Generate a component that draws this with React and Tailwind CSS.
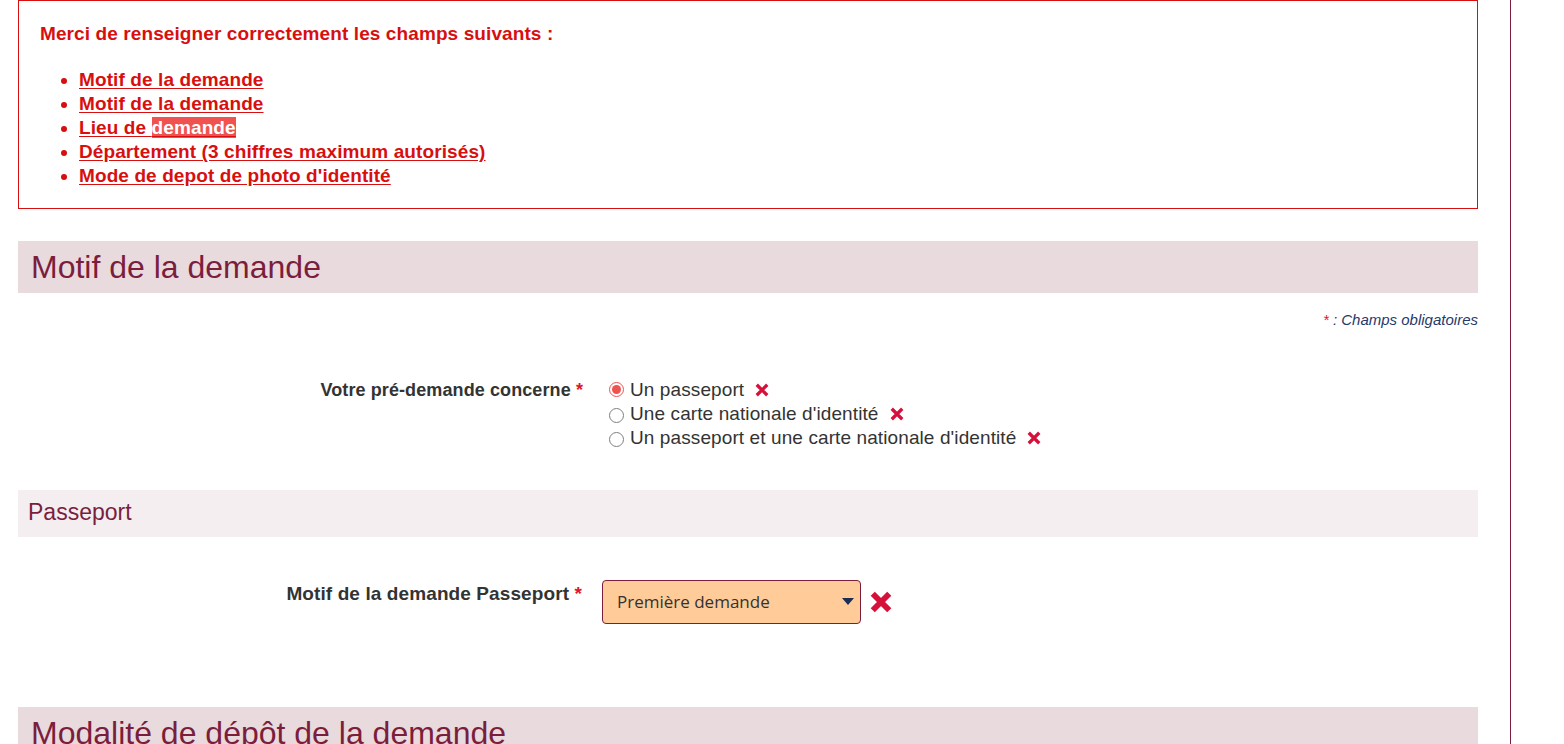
import React from "react";

function XIcon({ size = 13, stroke = 3 }) {
  return (
    <svg width={size} height={size} viewBox="0 0 12 12" className="inline-block">
      <path d="M1.5 1.5 L10.5 10.5 M10.5 1.5 L1.5 10.5" stroke="#d5103a" strokeWidth={stroke} strokeLinecap="butt" />
    </svg>
  );
}

function Radio({ checked }) {
  return checked ? (
    <span className="w-[15px] h-[15px] rounded-full border-[1.5px] border-[#ef5350] bg-white flex items-center justify-center shrink-0 mr-[6px] ml-[7px] mt-[4px]">
      <span className="block w-[9px] h-[9px] rounded-full bg-[#ef5350]"></span>
    </span>
  ) : (
    <span className="inline-block w-[15px] h-[15px] rounded-full border-[1.5px] border-[#808080] bg-white shrink-0 mr-[6px] ml-[7px] mt-[6px]"></span>
  );
}

export default function App() {
  const links = [
    "Motif de la demande",
    "Motif de la demande",
    null,
    "Département (3 chiffres maximum autorisés)",
    "Mode de depot de photo d'identité",
  ];
  return (
    <div className="w-[1564px] h-[744px] overflow-hidden bg-white font-['Liberation_Sans',Arial,sans-serif]">
      <div className="w-[1511px] h-[744px] border-r border-[#7b1e3c] pl-[18px] pr-[32px]">
        {/* Error box */}
        <div className="border border-[#d80f0f] h-[209px] pl-[21px] pt-[21px] text-[#d80f0f] tracking-[0.1px]">
          <p className="font-bold text-[19px] leading-[24px]">Merci de renseigner correctement les champs suivants :</p>
          <ul className="mt-[22px] list-disc pl-[39px] font-bold text-[19px] leading-[24px]">
            {links.map((l, i) => (
              <li key={i}>
                {l === null ? (
                  <a className="underline underline-offset-[2px]">
                    Lieu de <span className="bg-[#f0534f] text-white">demande</span>
                  </a>
                ) : (
                  <a className="underline underline-offset-[2px]">{l}</a>
                )}
              </li>
            ))}
          </ul>
        </div>

        {/* Section header */}
        <div className="mt-[32px] h-[52px] bg-[#e9dade] flex items-center pl-[13px]">
          <h2 className="text-[32px] leading-[36px] text-[#7b1e3c]">Motif de la demande</h2>
        </div>

        <p className="text-right italic text-[15px] leading-[18px] text-[#1f3a6b] mt-[18px]">
          <span className="text-[#e0162b]">*</span> : Champs obligatoires
        </p>

        {/* Radio row */}
        <div className="flex mt-[49px]">
          <div className="w-[584px] shrink-0 text-right pr-[19px] font-bold text-[18px] leading-[24px] text-[#333] tracking-[0.1px]">
            Votre pré-demande concerne <span className="text-[#e0162b]">*</span>
          </div>
          <div className="text-[19px] leading-[24px] text-[#333] tracking-[0.1px]">
            {[
              ["Un passeport", true],
              ["Une carte nationale d'identité", false],
              ["Un passeport et une carte nationale d'identité", false],
            ].map(([t, c], i) => (
              <div key={i} className="flex items-start">
                <Radio checked={c} />
                <span>{t}</span>
                <span className="ml-[11px] mt-[5px] flex"><XIcon size={14} stroke={2.8} /></span>
              </div>
            ))}
          </div>
        </div>

        {/* Sub header */}
        <div className="mt-[40px] h-[47px] bg-[#f4eef0] flex items-center pl-[10px]">
          <h3 className="text-[23px] leading-[28px] text-[#7b1e3c] -mt-[3px]">Passeport</h3>
        </div>

        {/* Select row */}
        <div className="flex mt-[43px] items-start">
          <div className="w-[584px] shrink-0 text-right pr-[20px] pt-[2px] font-bold text-[19px] leading-[24px] text-[#333] tracking-[0.1px]">
            Motif de la demande Passeport <span className="text-[#e0162b]">*</span>
          </div>
          <div className="flex items-center">
            <div className="w-[259px] h-[44px] rounded-[4px] border border-[#7b1e3c] bg-[#ffcc99] flex items-center justify-between pl-[14px] pr-[5px] font-['Open_Sans',sans-serif] text-[17px] text-[#333]">
              <span>Première demande</span>
              <svg width="14" height="8" viewBox="0 0 14 8"><path d="M1 0 L13 0 L7 7 Z" fill="#1c2d55" /></svg>
            </div>
            <span className="ml-[9px] flex"><XIcon size={22} stroke={3.2} /></span>
          </div>
        </div>

        {/* Section header 2 */}
        <div className="mt-[83px] h-[52px] bg-[#e9dade] flex items-center pl-[13px]">
          <h2 className="text-[32px] leading-[36px] text-[#7b1e3c]">Modalité de dépôt de la demande</h2>
        </div>
      </div>
    </div>
  );
}
